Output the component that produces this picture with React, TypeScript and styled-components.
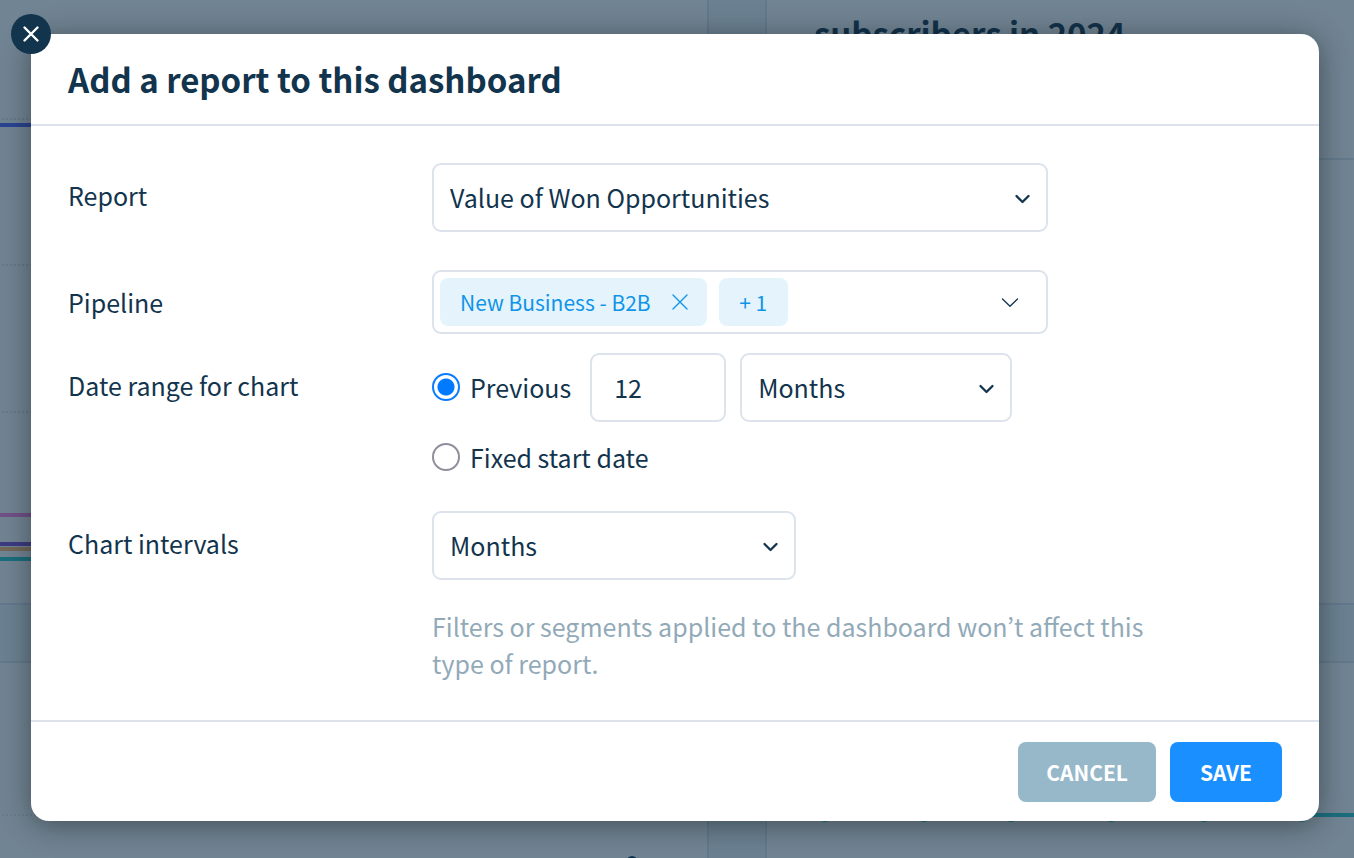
import React, { useState } from "react";
import styled, { createGlobalStyle } from "styled-components";

const ink = "#12344d";
const line = "#dce3ec";

const GlobalStyle = createGlobalStyle`
  *, *::before, *::after { box-sizing: border-box; }
  body {
    margin: 0;
    color: ${ink};
    font-family: "Noto Sans CJK KR", "Noto Sans", sans-serif;
    font-size: 25px;
    line-height: 36px;
  }
  button, input, select { font: inherit; color: inherit; }
`;

const Page = styled.div`
  position: relative;
  min-height: 100vh;
`;

const Dashboard = styled.main`
  position: absolute;
  inset: 0;
  overflow: hidden;
  display: grid;
  grid-template-columns: 709fr 589fr;
  grid-template-rows: 605px 1fr;
  gap: 56px;
  background: #f1f7fa;
`;

const Card = styled.section`
  min-width: 0;
  overflow: hidden;
  background: #fff;
  border: 2px solid #dbe3f0;
  border-width: ${(p: { $edges: string }) => p.$edges};
`;

const CardHeader = styled.header`
  height: 160px;
  padding: 8px 47px;
  border-bottom: 2px solid #dbe9f0;
`;

const CardTitle = styled.h2`
  margin: 0;
  font-size: 33px;
  line-height: 50px;
  font-weight: 700;
`;

const Chart = styled.svg`
  display: block;
  width: 100%;
  height: 100%;
`;

const Overlay = styled.div`
  position: relative;
  min-height: 100vh;
  padding: 34px 35px 37px 31px;
  background: rgba(18, 50, 75, 0.6);
`;

const Dialog = styled.form`
  position: relative;
  background: #fff;
  border-radius: 18px;
  box-shadow: 0 4px 30px rgba(0, 0, 0, 0.42);
`;

const CloseButton = styled.button`
  position: absolute;
  top: -20px;
  left: -20px;
  width: 40px;
  height: 40px;
  padding: 0;
  display: grid;
  place-items: center;
  border: 0;
  border-radius: 50%;
  background: ${ink};
  color: #fff;
`;

const DialogHeader = styled.header`
  padding: 20px 37px;
  border-bottom: 2px solid ${line};
`;

const DialogTitle = styled.h1`
  margin: 0;
  font-size: 33px;
  line-height: 50px;
  font-weight: 700;
`;

const DialogBody = styled.div`
  padding: 37px 37px 38px;
`;

const Row = styled.div`
  display: grid;
  grid-template-columns: 364px minmax(0, 1fr);
  margin-bottom: ${(p: { $gap: number }) => p.$gap}px;
`;

const Label = styled.label`
  padding-top: 14px;
`;

const GroupLabel = styled.span`
  padding-top: 14px;
`;

const SelectBox = styled.div`
  position: relative;
  width: 100%;
  max-width: ${(p: { $width: number }) => p.$width}px;
  height: 69px;

  svg {
    position: absolute;
    right: 16px;
    top: 26px;
    pointer-events: none;
  }
`;

const Select = styled.select`
  appearance: none;
  width: 100%;
  height: 100%;
  padding: 0 48px 2px 16px;
  border: 2px solid ${line};
  border-radius: 9px;
  background: #fff;
`;

const TagBox = styled.div`
  display: flex;
  align-items: center;
  gap: 12px;
  width: 100%;
  max-width: 616px;
  padding: 6px;
  border: 2px solid ${line};
  border-radius: 9px;
`;

const Tag = styled.span`
  display: flex;
  align-items: center;
  justify-content: center;
  gap: 20px;
  min-width: 69px;
  height: 48px;
  padding: 0 18px 0 20px;
  border-radius: 8px;
  background: #e5f4fc;
  color: #0f94e8;
  font-size: 21px;
`;

const MoreTag = styled(Tag)`
  padding: 0 20px;
`;

const IconButton = styled.button`
  display: grid;
  place-items: center;
  padding: 0;
  border: 0;
  background: none;
`;

const OpenButton = styled(IconButton)`
  margin-left: auto;
  padding-right: 20px;
`;

const Options = styled.div`
  display: flex;
  flex-direction: column;
  gap: 17px;
`;

const Option = styled.div`
  display: flex;
  align-items: center;
`;

const RadioLabel = styled.label`
  display: flex;
  align-items: center;
  gap: 10px;
  margin-right: 19px;
  padding-bottom: 2px;
`;

const Radio = styled.input`
  appearance: none;
  width: 28px;
  height: 28px;
  margin: 0;
  border: 2px solid #8f8f9d;
  border-radius: 50%;
  background: #fff;

  &:checked {
    border-color: #0a7cff;
    background: radial-gradient(circle, #007aff 8px, #fff 9px);
  }
`;

const NumberInput = styled.input`
  width: 136px;
  height: 69px;
  margin-right: 14px;
  padding: 0 22px 2px;
  border: 2px solid ${line};
  border-radius: 9px;
`;

const Hint = styled.p`
  max-width: 740px;
  margin: 0 0 0 364px;
  line-height: 37px;
  color: #92aab8;
`;

const DialogFooter = styled.footer`
  display: flex;
  justify-content: flex-end;
  gap: 14px;
  padding: 20px 37px 19px;
  border-top: 2px solid ${line};
`;

const Button = styled.button`
  min-width: 112px;
  height: 60px;
  padding: 0 28px;
  border: 0;
  border-radius: 8px;
  background: ${(p: { $primary?: boolean }) => (p.$primary ? "#1a8fff" : "#96b8c9")};
  color: #fff;
  font-size: 21px;
  font-weight: 700;
`;

const Chevron = ({ thin }: { thin?: boolean }) => (
  <svg width="20" height="20" viewBox="0 0 20 20" fill="none" stroke={ink} aria-hidden="true">
    <path
      d={thin ? "M2.500 7 10 14.300l7.500-7.300" : "M4.500 7l6 6 6-6"}
      strokeWidth={thin ? 1.3 : 2.3}
      strokeLinecap="round"
      strokeLinejoin="round"
    />
  </svg>
);

const Cross = ({ weight, inset }: { weight: number; inset: number }) => (
  <svg width="18" height="18" viewBox="0 0 18 18" fill="none" stroke="currentColor" aria-hidden="true">
    <path
      d={`M${inset} ${inset}L${18 - inset} ${18 - inset}M${18 - inset} ${inset}L${inset} ${18 - inset}`}
      strokeWidth={weight}
      strokeLinecap="round"
    />
  </svg>
);

const gridLines = [119, 265, 412];
const series = [
  { y: 125, color: "#4f5ffa" },
  { y: 515, color: "#ff7de1" },
  { y: 549, color: "#ffb96b" },
  { y: 544, color: "#7a4ad6" },
  { y: 559, color: "#28c8c8" },
];
const markers = [58, 157, 244, 344, 437, 535];

function Background() {
  return (
    <Dashboard aria-hidden="true">
      <Card $edges="0 2px 2px 0">
        <Chart>
          {gridLines.map((y) => (
            <line key={y} x1="2" x2="100%" y1={y} y2={y} stroke="#dfe3e9" strokeWidth="2" strokeDasharray="2 2" />
          ))}
          {series.map((s) => (
            <line key={s.y} x1="0" x2="100%" y1={s.y} y2={s.y} stroke={s.color} strokeWidth="4" />
          ))}
        </Chart>
      </Card>
      <Card $edges="0 0 2px 2px">
        <CardHeader>
          <CardTitle>subscribers in 2024</CardTitle>
        </CardHeader>
      </Card>
      <Card $edges="2px 2px 0 0">
        <Chart>
          <line x1="2" x2="100%" y1="152" y2="152" stroke="#d2d8e0" strokeWidth="1" strokeDasharray="2 2" />
          <circle cx="632" cy="199" r="6" fill={ink} />
        </Chart>
      </Card>
      <Card $edges="2px 0 0 2px">
        <Chart>
          <line x1="59" x2="100%" y1="152" y2="152" stroke="#28c8c8" strokeWidth="4" />
          {markers.map((x) => (
            <circle key={x} cx={x} cy="152" r="7" fill="#28c8c8" />
          ))}
        </Chart>
      </Card>
    </Dashboard>
  );
}

export default function App() {
  const [range, setRange] = useState("previous");

  return (
    <Page>
      <GlobalStyle />
      <Background />
      <Overlay>
        <Dialog role="dialog" aria-labelledby="dialog-title" onSubmit={(e: React.FormEvent) => e.preventDefault()}>
          <CloseButton type="button" aria-label="Close">
            <Cross weight={2.4} inset={2.5} />
          </CloseButton>
          <DialogHeader>
            <DialogTitle id="dialog-title">Add a report to this dashboard</DialogTitle>
          </DialogHeader>
          <DialogBody>
            <Row $gap={38}>
              <Label htmlFor="report">Report</Label>
              <SelectBox $width={616}>
                <Select id="report">
                  <option>Value of Won Opportunities</option>
                </Select>
                <Chevron />
              </SelectBox>
            </Row>
            <Row $gap={19}>
              <Label htmlFor="pipeline">Pipeline</Label>
              <TagBox>
                <Tag>
                  New Business - B2B
                  <IconButton type="button" aria-label="Remove New Business - B2B">
                    <Cross weight={1.4} inset={2} />
                  </IconButton>
                </Tag>
                <MoreTag>+ 1</MoreTag>
                <OpenButton id="pipeline" type="button" aria-label="Pipeline">
                  <Chevron thin />
                </OpenButton>
              </TagBox>
            </Row>
            <Row $gap={34} role="radiogroup" aria-labelledby="range-label">
              <GroupLabel id="range-label">Date range for chart</GroupLabel>
              <Options>
                <Option>
                  <RadioLabel>
                    <Radio
                      type="radio"
                      name="range"
                      checked={range === "previous"}
                      onChange={() => setRange("previous")}
                    />
                    Previous
                  </RadioLabel>
                  <NumberInput type="text" inputMode="numeric" defaultValue="12" aria-label="Number of periods" />
                  <SelectBox $width={272}>
                    <Select aria-label="Period unit">
                      <option>Months</option>
                    </Select>
                    <Chevron />
                  </SelectBox>
                </Option>
                <Option>
                  <RadioLabel>
                    <Radio
                      type="radio"
                      name="range"
                      checked={range === "fixed"}
                      onChange={() => setRange("fixed")}
                    />
                    Fixed start date
                  </RadioLabel>
                </Option>
              </Options>
            </Row>
            <Row $gap={28}>
              <Label htmlFor="intervals">Chart intervals</Label>
              <SelectBox $width={364}>
                <Select id="intervals">
                  <option>Months</option>
                </Select>
                <Chevron />
              </SelectBox>
            </Row>
            <Hint>Filters or segments applied to the dashboard won’t affect this type of report.</Hint>
          </DialogBody>
          <DialogFooter>
            <Button type="button">CANCEL</Button>
            <Button type="submit" $primary>
              SAVE
            </Button>
          </DialogFooter>
        </Dialog>
      </Overlay>
    </Page>
  );
}
